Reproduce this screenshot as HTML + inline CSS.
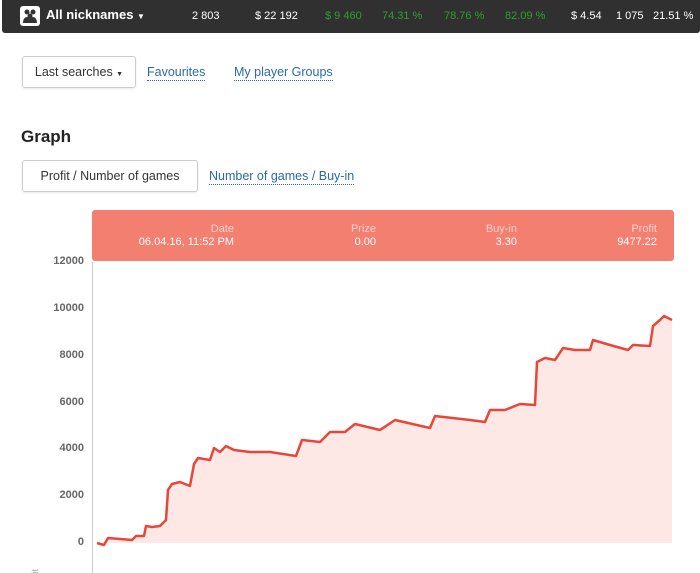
<!DOCTYPE html>
<html><head><meta charset="utf-8"><style>
body{margin:0;width:700px;height:573px;overflow:hidden;background:#fff;font-family:"Liberation Sans",sans-serif;position:relative}
.top{position:absolute;left:2px;top:0;width:698px;height:33px;background:#303030;border-radius:0 0 3px 3px;color:#fff;font-size:11px}
.top span{position:absolute;top:10px}
.g{color:#2ea02e}
.btn{position:absolute;border:1px solid #ccc;border-radius:3px;font-size:12.5px;color:#333;box-shadow:0 1px 2px rgba(0,0,0,.08)}
.lnk{position:absolute;font-size:12.5px;color:#2a6aa8;border-bottom:1px dotted #2a6aa8;line-height:15px}
.tip{position:absolute;left:92px;top:210px;width:582px;height:51px;background:#f27f70;border-radius:3px;color:#fff;font-size:11px}
.tip div{position:absolute;text-align:right;line-height:13px;top:13px}
.tip i{font-style:normal;color:#fcd0ca}
.yl{position:absolute;right:616px;font-size:11px;font-weight:bold;color:#666}
</style></head><body>
<div class="top">
<svg style="position:absolute;left:18px;top:6px" width="20" height="20"><rect width="20" height="20" rx="3" fill="#fff"/><circle cx="7" cy="6" r="2.5" fill="#333"/><circle cx="13" cy="6" r="2.5" fill="#333"/><circle cx="10" cy="10" r="2.5" fill="#333"/><path d="M3 17c0-4 2-6 4-6s4 2 4 6zM9 17c0-4 2-6 4-6s4 2 4 6z" fill="#333"/></svg>
<span style="left:44px;top:7px;font-size:13px;font-weight:bold">All nicknames <small style="font-size:8px">▼</small></span>
<span style="left:190px">2 803</span>
<span style="left:253px">$ 22 192</span>
<span class="g" style="left:323px">$ 9 460</span>
<span class="g" style="left:380px">74.31 %</span>
<span class="g" style="left:442px">78.76 %</span>
<span class="g" style="left:503px">82.09 %</span>
<span style="left:569px">$ 4.54</span>
<span style="left:614px">1 075</span>
<span style="left:651px">21.51 %</span>
</div>
<div class="btn" style="left:22px;top:56px;width:112px;height:30px;line-height:30px;text-align:center">Last searches <small style="font-size:7px">▼</small></div>
<div class="lnk" style="left:147px;top:65px">Favourites</div>
<div class="lnk" style="left:234px;top:65px">My player Groups</div>
<div style="position:absolute;left:21px;top:127px;font-size:17px;font-weight:bold;color:#222">Graph</div>
<div class="btn" style="left:22px;top:160px;width:174px;height:30px;line-height:30px;text-align:center">Profit / Number of games</div>
<div class="lnk" style="left:209px;top:169px">Number of games / Buy-in</div>
<div class="tip">
<div style="right:440px"><i>Date</i><br>06.04.16, 11:52 PM</div>
<div style="right:298px"><i>Prize</i><br>0.00</div>
<div style="right:157px"><i>Buy-in</i><br>3.30</div>
<div style="right:17px"><i>Profit</i><br>9477.22</div>
</div>
<div class="yl" style="top:255px">12000</div>
<div class="yl" style="top:302px">10000</div>
<div class="yl" style="top:349px">8000</div>
<div class="yl" style="top:396px">6000</div>
<div class="yl" style="top:442px">4000</div>
<div class="yl" style="top:489px">2000</div>
<div class="yl" style="top:536px">0</div>
<svg style="position:absolute;left:0;top:0" width="700" height="573">
<line x1="92.5" y1="262" x2="92.5" y2="573" stroke="#ccc"/>
<polygon fill="#fde8e5" points="97,543 104,545 108,538 120,539 132,540 136,536 144,536 146,526 152,527 160,526 164,522 166,520 168,490 172,484 180,482 190,486 194,464 198,458 210,460 214,448 220,452 226,446 234,450 250,452 270,452 296,456 302,440 320,442 330,432 345,432 355,424 380,430 395,420 430,428 435,416 470,420 485,422 490,410 505,410 520,404 535,405 537,362 545,358 555,360 563,348 575,350 590,350 593,340 610,345 628,350 633,345 650,346 653,326 660,320 664,316 672,320 672,543"/>
<polyline fill="none" stroke="#e8463a" stroke-width="2.5" stroke-linejoin="round" points="97,543 104,545 108,538 120,539 132,540 136,536 144,536 146,526 152,527 160,526 164,522 166,520 168,490 172,484 180,482 190,486 194,464 198,458 210,460 214,448 220,452 226,446 234,450 250,452 270,452 296,456 302,440 320,442 330,432 345,432 355,424 380,430 395,420 430,428 435,416 470,420 485,422 490,410 505,410 520,404 535,405 537,362 545,358 555,360 563,348 575,350 590,350 593,340 610,345 628,350 633,345 650,346 653,326 660,320 664,316 672,320"/>
<text x="38" y="590" font-size="9" fill="#aaa" transform="rotate(-90 38 590)" font-family="Liberation Sans">Profit</text>
</svg>
</body></html>
